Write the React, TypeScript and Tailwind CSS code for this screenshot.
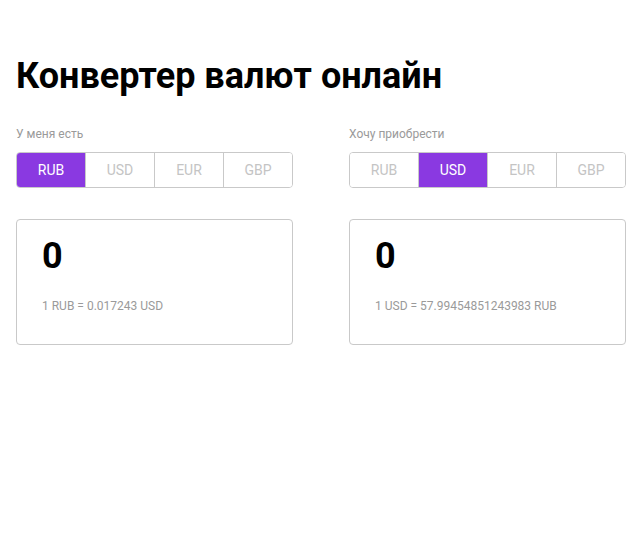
import { useState } from "react";

const currencies = ["RUB", "USD", "EUR", "GBP"];

const Switcher = ({ value, onChange }: { value: string; onChange: (v: string) => void }) => (
  <div className="flex h-9 overflow-hidden rounded border border-[#c9c9c9]">
    {currencies.map((c, i) => (
      <button
        key={c}
        onClick={() => onChange(c)}
        className={`flex-1 text-sm ${i > 0 ? "border-l border-[#c9c9c9]" : ""} ${
          value === c ? "bg-[#8a39e1] text-white" : "bg-white text-[#c4c4c4]"
        }`}
      >
        {c}
      </button>
    ))}
  </div>
);

const Block = ({ label, cur, rate, onChange }: { label: string; cur: string; rate: string; onChange: (v: string) => void }) => (
  <div className="flex flex-col">
    <div className="mb-[10px] text-xs text-[#9a9a9a]">{label}</div>
    <Switcher value={cur} onChange={onChange} />
    <div className="mt-[31px] h-[126px] rounded border border-[#c9c9c9] px-[25px] pt-[12px]">
      <div className="text-[36px] font-bold leading-[48px] text-black">0</div>
      <div className="mt-[18px] text-xs text-[#9a9a9a]">{rate}</div>
    </div>
  </div>
);

export default function App() {
  const [from, setFrom] = useState("RUB");
  const [to, setTo] = useState("USD");
  return (
    <div className="min-h-[547px] bg-white pl-4 pr-[15px] pt-[52px] font-['Roboto',sans-serif]">
      <h1 className="mb-[26px] text-[36px] font-bold leading-[48px] text-black">Конвертер валют онлайн</h1>
      <div className="grid grid-cols-2 gap-14">
        <Block label="У меня есть" cur={from} onChange={setFrom} rate="1 RUB = 0.017243 USD" />
        <Block label="Хочу приобрести" cur={to} onChange={setTo} rate="1 USD = 57.99454851243983 RUB" />
      </div>
    </div>
  );
}
